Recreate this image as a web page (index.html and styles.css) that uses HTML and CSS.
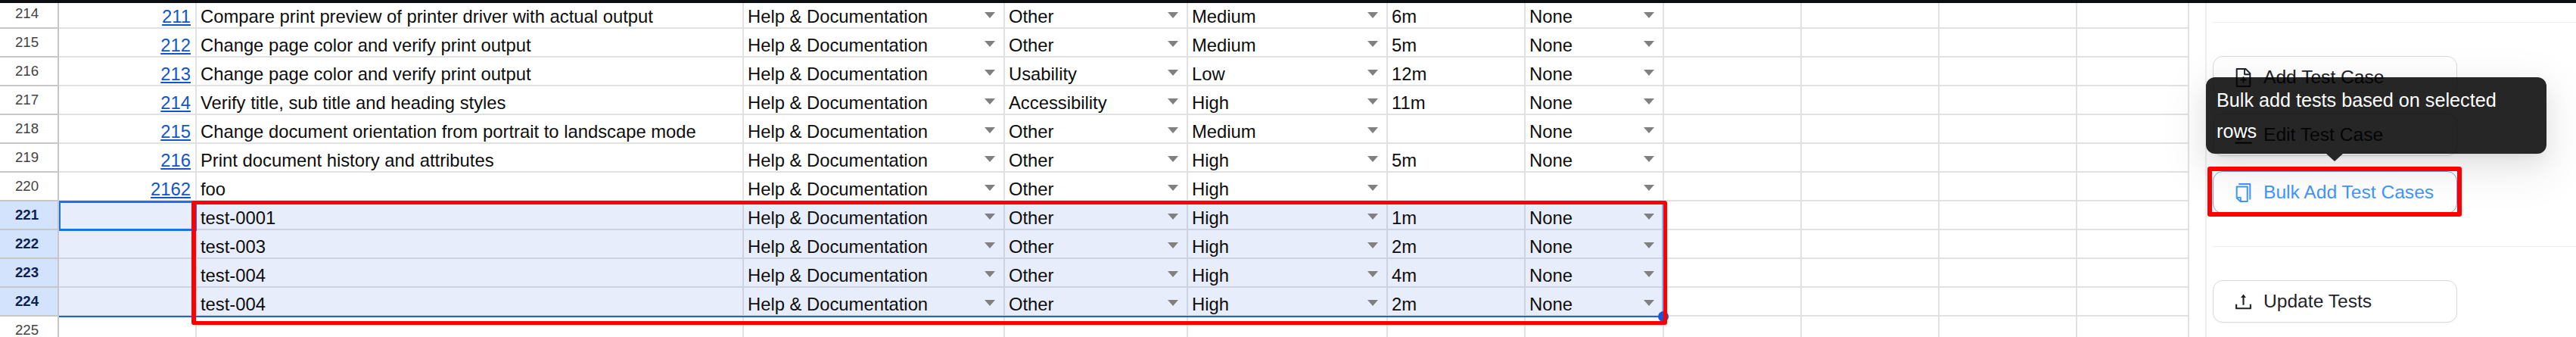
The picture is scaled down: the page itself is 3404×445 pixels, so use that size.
FILE: index.html
```html
<!DOCTYPE html>
<html>

<head>
    <meta charset="utf-8">
    <title>Test cases</title>
    <link rel="stylesheet" href="styles.css">
</head>

<body>
    <div class="top-bar"></div>

    <div class="main">
        <div class="sheet">
            <table class="grid">
                <colgroup>
                    <col class="c-head"><col class="c-id"><col class="c-title"><col class="c-area"><col class="c-type">
                    <col class="c-prio"><col class="c-time"><col class="c-status"><col class="c-blank"><col class="c-blank">
                    <col class="c-blank"><col class="c-last">
                </colgroup>
                <tr>
                    <th>214</th><td class="num"><a href="#">211</a></td><td>Compare print preview of printer driver with actual output</td>
                    <td><div class="drop">Help &amp; Documentation<i></i></div></td><td><div class="drop">Other<i></i></div></td><td><div class="drop">Medium<i></i></div></td>
                    <td>6m</td><td><div class="drop">None<i></i></div></td><td></td><td></td><td></td><td></td>
                </tr>
                <tr>
                    <th>215</th><td class="num"><a href="#">212</a></td><td>Change page color and verify print output</td>
                    <td><div class="drop">Help &amp; Documentation<i></i></div></td><td><div class="drop">Other<i></i></div></td><td><div class="drop">Medium<i></i></div></td>
                    <td>5m</td><td><div class="drop">None<i></i></div></td><td></td><td></td><td></td><td></td>
                </tr>
                <tr>
                    <th>216</th><td class="num"><a href="#">213</a></td><td>Change page color and verify print output</td>
                    <td><div class="drop">Help &amp; Documentation<i></i></div></td><td><div class="drop">Usability<i></i></div></td><td><div class="drop">Low<i></i></div></td>
                    <td>12m</td><td><div class="drop">None<i></i></div></td><td></td><td></td><td></td><td></td>
                </tr>
                <tr>
                    <th>217</th><td class="num"><a href="#">214</a></td><td>Verify title, sub title and heading styles</td>
                    <td><div class="drop">Help &amp; Documentation<i></i></div></td><td><div class="drop">Accessibility<i></i></div></td><td><div class="drop">High<i></i></div></td>
                    <td>11m</td><td><div class="drop">None<i></i></div></td><td></td><td></td><td></td><td></td>
                </tr>
                <tr>
                    <th>218</th><td class="num"><a href="#">215</a></td><td>Change document orientation from portrait to landscape mode</td>
                    <td><div class="drop">Help &amp; Documentation<i></i></div></td><td><div class="drop">Other<i></i></div></td><td><div class="drop">Medium<i></i></div></td>
                    <td></td><td><div class="drop">None<i></i></div></td><td></td><td></td><td></td><td></td>
                </tr>
                <tr>
                    <th>219</th><td class="num"><a href="#">216</a></td><td>Print document history and attributes</td>
                    <td><div class="drop">Help &amp; Documentation<i></i></div></td><td><div class="drop">Other<i></i></div></td><td><div class="drop">High<i></i></div></td>
                    <td>5m</td><td><div class="drop">None<i></i></div></td><td></td><td></td><td></td><td></td>
                </tr>
                <tr>
                    <th>220</th><td class="num"><a href="#">2162</a></td><td>foo</td>
                    <td><div class="drop">Help &amp; Documentation<i></i></div></td><td><div class="drop">Other<i></i></div></td><td><div class="drop">High<i></i></div></td>
                    <td></td><td><div class="drop"><i></i></div></td><td></td><td></td><td></td><td></td>
                </tr>
                <tr class="picked">
                    <th>221</th><td class="num"></td><td>test-0001</td>
                    <td><div class="drop">Help &amp; Documentation<i></i></div></td><td><div class="drop">Other<i></i></div></td><td><div class="drop">High<i></i></div></td>
                    <td>1m</td><td><div class="drop">None<i></i></div></td><td class="off"></td><td class="off"></td><td class="off"></td><td class="off"></td>
                </tr>
                <tr class="picked">
                    <th>222</th><td class="num"></td><td>test-003</td>
                    <td><div class="drop">Help &amp; Documentation<i></i></div></td><td><div class="drop">Other<i></i></div></td><td><div class="drop">High<i></i></div></td>
                    <td>2m</td><td><div class="drop">None<i></i></div></td><td class="off"></td><td class="off"></td><td class="off"></td><td class="off"></td>
                </tr>
                <tr class="picked">
                    <th>223</th><td class="num"></td><td>test-004</td>
                    <td><div class="drop">Help &amp; Documentation<i></i></div></td><td><div class="drop">Other<i></i></div></td><td><div class="drop">High<i></i></div></td>
                    <td>4m</td><td><div class="drop">None<i></i></div></td><td class="off"></td><td class="off"></td><td class="off"></td><td class="off"></td>
                </tr>
                <tr class="picked">
                    <th>224</th><td class="num"></td><td>test-004</td>
                    <td><div class="drop">Help &amp; Documentation<i></i></div></td><td><div class="drop">Other<i></i></div></td><td><div class="drop">High<i></i></div></td>
                    <td>2m</td><td><div class="drop">None<i></i></div></td><td class="off"></td><td class="off"></td><td class="off"></td><td class="off"></td>
                </tr>
                <tr>
                    <th>225</th><td></td><td></td><td></td><td></td><td></td><td></td><td></td><td></td><td></td><td></td><td></td>
                </tr>
            </table>
        </div>

        <div class="panel">
            <div class="panel-group">
                <button class="action">
                    <svg viewBox="64 64 896 896"><path d="M854.6 288.6L639.4 73.4c-6-6-14.1-9.4-22.6-9.4H192c-17.7 0-32 14.3-32 32v832c0 17.7 14.3 32 32 32h640c17.7 0 32-14.3 32-32V311.3c0-8.5-3.4-16.7-9.4-22.7zM790.2 326H602V137.8L790.2 326zm1.8 562H232V136h302v216a42 42 0 0 0 42 42h216v494zM544 472c0-4.4-3.6-8-8-8h-48c-4.4 0-8 3.6-8 8v108H372c-4.4 0-8 3.6-8 8v48c0 4.4 3.6 8 8 8h108v108c0 4.4 3.6 8 8 8h48c4.4 0 8-3.6 8-8V644h108c4.4 0 8-3.6 8-8v-48c0-4.4-3.6-8-8-8H544V472z"/></svg>
                    Add Test Case
                </button>
                <button class="action">
                    <svg viewBox="64 64 896 896"><path d="M257.7 752c2 0 4-.2 6-.5L431.9 722c2-.4 3.9-1.3 5.3-2.8l423.9-423.9a9.96 9.96 0 0 0 0-14.1L694.9 114.9c-1.9-1.9-4.4-2.9-7.1-2.9s-5.2 1-7.1 2.9L256.8 538.8c-1.5 1.5-2.4 3.3-2.8 5.3l-29.5 168.2a33.5 33.5 0 0 0 9.4 29.8c6.6 6.4 14.9 9.9 23.8 9.9zm67.4-174.4L687.8 215l73.3 73.3-362.7 362.6-88.9 15.7 15.6-89zM880 836H144c-17.7 0-32 14.3-32 32v36c0 4.4 3.6 8 8 8h784c4.4 0 8-3.6 8-8v-36c0-17.7-14.3-32-32-32z"/></svg>
                    Edit Test Case
                </button>
                <button class="action hover">
                    <svg viewBox="64 64 896 896"><path d="M832 64H296c-4.4 0-8 3.6-8 8v56c0 4.4 3.6 8 8 8h496v688c0 4.4 3.6 8 8 8h56c4.4 0 8-3.6 8-8V96c0-17.7-14.3-32-32-32zM704 192H192c-17.7 0-32 14.3-32 32v530.7c0 8.5 3.4 16.6 9.4 22.6l173.3 173.3c2.2 2.2 4.7 4 7.4 5.5v1.9h4.2c3.5 1.3 7.2 2 11 2H704c17.7 0 32-14.3 32-32V224c0-17.7-14.3-32-32-32zM350 856.2L263.9 770H350v86.2zM664 888H414V746c0-22.1-17.9-40-40-40H232V264h432v624z"/></svg>
                    Bulk Add Test Cases
                </button>
            </div>
            <div class="panel-group">
                <button class="action">
                    <svg viewBox="64 64 896 896"><path d="M400 317.7h73.9V656c0 4.4 3.6 8 8 8h60c4.4 0 8-3.6 8-8V317.7H624c6.7 0 10.4-7.7 6.3-12.9L518.3 163a8 8 0 0 0-12.6 0l-112 141.7c-4.1 5.3-.4 13 6.3 13zM878 626h-60c-4.4 0-8 3.6-8 8v154H214V634c0-4.4-3.6-8-8-8h-60c-4.4 0-8 3.6-8 8v198c0 17.7 14.3 32 32 32h684c17.7 0 32-14.3 32-32V634c0-4.4-3.6-8-8-8z"/></svg>
                    Update Tests
                </button>
            </div>
        </div>
    </div>

    <!-- selection drawn on top of the grid -->
    <div class="selection"></div>
    <div class="active-cell"></div>
    <div class="fill-handle"></div>

    <div class="tooltip">Bulk add tests based on selected rows</div>

    <!-- red marks added on the screenshot -->
    <div class="mark mark-rows"></div>
    <div class="mark mark-button"></div>
</body>

</html>
```

FILE: styles.css
```css
html,
body {
    margin: 0;
    padding: 0;
    height: 445px;
    overflow: hidden;
    background-color: #fff;
    font-family: "Liberation Sans", Arial, sans-serif;
}

.top-bar {
    height: 4px;
    background-color: #0b0d10;
}

.main {
    display: flex;
}

.sheet {
    width: 2914px;
    height: 441px;
    flex: none;
    overflow: hidden;
}

/* grid */
.grid {
    table-layout: fixed;
    width: 2893px;
    border-collapse: separate;
    border-spacing: 0;
    font-size: 23.8px;
    line-height: 26px;
    color: #0d0d0d;
}

.c-head { width: 78px; }
.c-id { width: 182px; }
.c-title { width: 723px; }
.c-area { width: 345px; }
.c-type { width: 242px; }
.c-prio { width: 264px; }
.c-time { width: 182px; }
.c-status { width: 183px; }
.c-blank { width: 182px; }
.c-last { width: 148px; }

.grid td,
.grid th {
    box-sizing: border-box;
    height: 38px;
    padding: 0 6px 1px 5px;
    vertical-align: bottom;
    white-space: nowrap;
    overflow: hidden;
    border-right: 2px solid #e1e1e1;
    border-bottom: 2px solid #e1e1e1;
}

.grid tr:first-child td,
.grid tr:first-child th {
    height: 34px;
}

.grid th {
    padding: 0 5px 7px 0;
    font-size: 18.7px;
    line-height: 22px;
    font-weight: normal;
    text-align: center;
    color: #444;
    border-right-color: #c7c7c7;
    border-bottom-color: #c7c7c7;
}

.grid .num {
    padding-right: 6px;
    text-align: right;
}

.num a {
    color: #1155cc;
    text-decoration: underline;
}

.picked td {
    background-color: #e8edfb;
    border-right-color: #ccd2e0;
    border-bottom-color: #ccd2e0;
}

.picked th {
    background-color: #d3e3fd;
    font-weight: bold;
    color: #0b2150;
}

.picked td.off {
    background-color: #fff;
    border-right-color: #e1e1e1;
    border-bottom-color: #e1e1e1;
}

.drop {
    display: flex;
    align-items: flex-start;
    justify-content: space-between;
    height: 26px;
}

.drop i {
    width: 0;
    height: 0;
    margin: 7px 5px 0 auto;
    border-left: 7px solid transparent;
    border-right: 7px solid transparent;
    border-top: 8px solid #808080;
}

/* side panel */
.panel {
    flex: 1;
    box-sizing: border-box;
    height: 441px;
    overflow: hidden;
    padding: 25px 0 0 8px;
    border-left: 2px solid #eee;
}

.panel-group {
    display: flex;
    flex-direction: column;
    gap: 20px;
    padding: 44px 0 43px;
    border-top: 1px solid #efefef;
}

.action {
    display: flex;
    align-items: center;
    gap: 14px;
    box-sizing: border-box;
    width: 323px;
    height: 56px;
    padding: 0 0 0 27px;
    font-family: inherit;
    font-size: 24.6px;
    color: #1f2329;
    background-color: #fff;
    border: 1px solid #d9d9d9;
    border-radius: 13px;
    box-shadow: 0 2px 0 rgba(0, 0, 0, 0.02);
}

.action svg {
    width: 25px;
    height: 25px;
    fill: currentColor;
}

.action.hover {
    color: #4096ff;
    border-color: #6aaeff;
}

/* overlays */
.selection {
    position: absolute;
    left: 78px;
    top: 265px;
    width: 2120px;
    height: 154px;
    box-sizing: border-box;
    border-bottom: 2px solid #1a66d6;
    border-right: 2px solid #8ab4f8;
}

.active-cell {
    position: absolute;
    left: 78px;
    top: 265px;
    width: 182px;
    height: 40px;
    box-sizing: border-box;
    border: 3px solid #1a73e8;
    border-left-width: 2px;
}

.fill-handle {
    position: absolute;
    left: 2191px;
    top: 411px;
    width: 14px;
    height: 14px;
    border-radius: 50%;
    background-color: #1a57d6;
}

.tooltip {
    position: absolute;
    left: 2915px;
    top: 102px;
    box-sizing: border-box;
    width: 450px;
    height: 101px;
    padding: 10px 14px;
    font-size: 25.2px;
    line-height: 41px;
    color: #fff;
    background-color: rgba(0, 0, 0, 0.85);
    border-radius: 12px;
    box-shadow: 0 12px 32px rgba(0, 0, 0, 0.08), 0 6px 12px -8px rgba(0, 0, 0, 0.12), 0 18px 56px 16px rgba(0, 0, 0, 0.05);
}

.tooltip::after {
    content: "";
    position: absolute;
    left: 159px;
    top: 101px;
    border-left: 11px solid transparent;
    border-right: 11px solid transparent;
    border-top: 10px solid #262626;
}

.mark {
    position: absolute;
    box-sizing: border-box;
    border: 6px solid #ff0000;
    border-radius: 3px;
}

.mark-rows {
    left: 253px;
    top: 265px;
    width: 1950px;
    height: 164px;
    border-width: 5px 5px 5px 6px;
}

.mark-button {
    left: 2917px;
    top: 220px;
    width: 336px;
    height: 66px;
}
```
